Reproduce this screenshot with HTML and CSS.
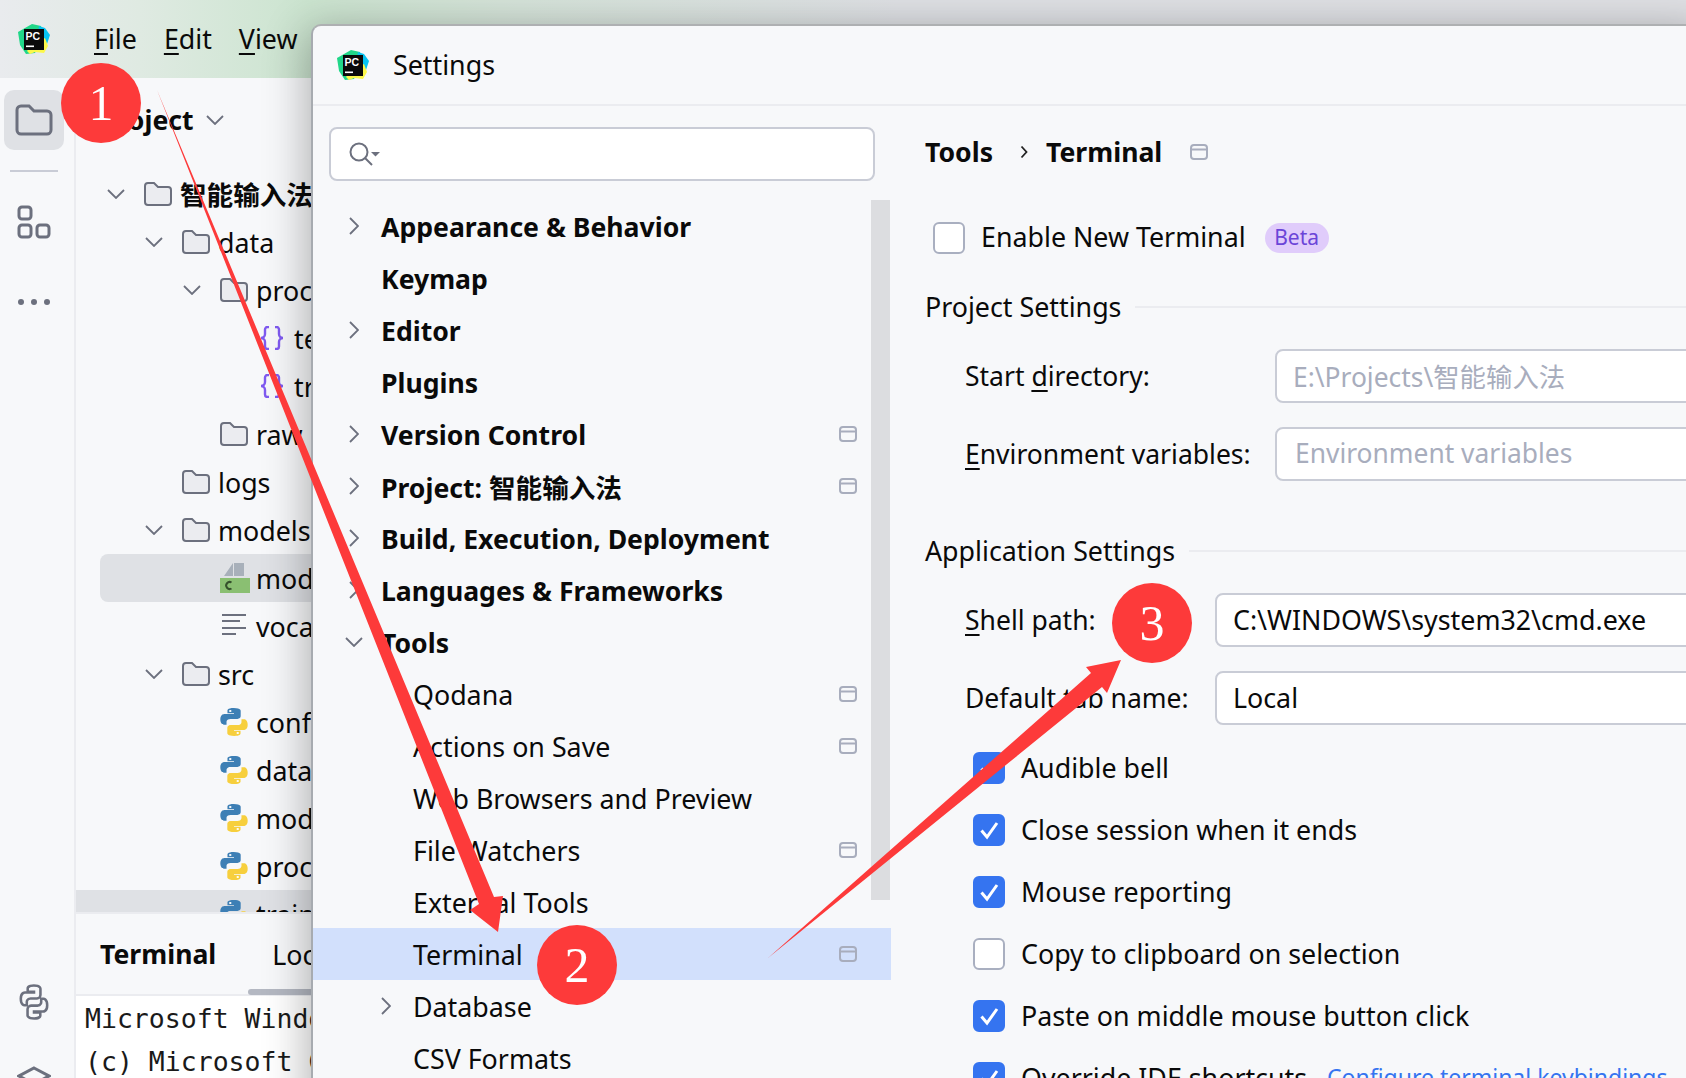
FILE: index.html
```html
<!DOCTYPE html>
<html lang="zh">
<head>
<meta charset="utf-8">
<title>Settings</title>
<link rel="stylesheet" href="styles.css">
</head>
<body>
<svg class="sprite" xmlns="http://www.w3.org/2000/svg">
  <symbol id="folder" viewBox="0 0 28 24"><path d="M1 4a3 3 0 0 1 3-3h6l4 4h10a3 3 0 0 1 3 3v12a3 3 0 0 1-3 3H4a3 3 0 0 1-3-3z" fill="#ebecf0" stroke="#6c707e" stroke-width="2"/></symbol>
  <symbol id="folder-plain" viewBox="0 0 38 32"><path d="M2 6a4 4 0 0 1 4-4h8l5 5h13a4 4 0 0 1 4 4v15a4 4 0 0 1-4 4H6a4 4 0 0 1-4-4z" fill="none" stroke="#6c707e" stroke-width="3"/></symbol>
  <symbol id="chev-down" viewBox="0 0 18 10"><path d="M1 1l8 8 8-8" fill="none" stroke="#6c707e" stroke-width="1.8"/></symbol>
  <symbol id="chev-right" viewBox="0 0 10 18"><path d="M1 1l8 8-8 8" fill="none" stroke="#6c707e" stroke-width="1.8"/></symbol>
  <symbol id="scope" viewBox="0 0 18 16"><rect x="1" y="1" width="16" height="14" rx="3" fill="none" stroke="#a8adbd" stroke-width="2"/><path d="M1 5.5h16" stroke="#a8adbd" stroke-width="2"/></symbol>
  <symbol id="check" viewBox="0 0 32 32"><path d="M8.5 16.5l5.5 6.5 10-14" fill="none" stroke="#fff" stroke-width="3"/></symbol>
  <symbol id="py" viewBox="3 1 18 22" preserveAspectRatio="none">
    <path fill="#3d7fb5" d="M11.9 1C7.5 1 7.8 3 7.8 3v2.1h4.2v.6H6.1S3.2 5.4 3.2 9.9s2.5 4.3 2.5 4.3h1.5v-2.1s-.1-2.5 2.5-2.5h4.2s2.4 0 2.4-2.3V3.4S16.7 1 11.9 1z"/>
    <circle cx="9.6" cy="3.3" r=".8" fill="#fff"/>
    <path fill="#f7cf3d" transform="rotate(180 12 12)" d="M11.9 1C7.5 1 7.8 3 7.8 3v2.1h4.2v.6H6.1S3.2 5.4 3.2 9.9s2.5 4.3 2.5 4.3h1.5v-2.1s-.1-2.5 2.5-2.5h4.2s2.4 0 2.4-2.3V3.4S16.7 1 11.9 1z"/>
    <circle cx="14.4" cy="20.7" r=".8" fill="#fff"/>
  </symbol>
  <symbol id="json" viewBox="0 0 24 24"><path d="M9 1H7.500A2.500 2.500 0 0 0 5 3.500V8a4 4 0 0 1-4 4 4 4 0 0 1 4 4v4.500A2.500 2.500 0 0 0 7.500 23H9M15 1h1.500A2.500 2.500 0 0 1 19 3.500V8a4 4 0 0 0 4 4 4 4 0 0 0-4 4v4.500a2.500 2.500 0 0 1-2.500 2.500H15" fill="none" stroke="#7f5af0" stroke-width="2.400"/></symbol>
  <symbol id="pc" viewBox="0 0 32 32">
    <path fill="#21d789" d="M0 9l14-8 9 2 2 10-8 17-9 1-6-9z"/>
    <path fill="#07c3f2" d="M21 3l6 2 5 7-3 9-10-6z"/>
    <path fill="#fcf84a" d="M9 28l5-6 13-7 3 8-4 7-9-1-5 2z"/>
    <rect x="6" y="6" width="20" height="21" fill="#0a0a0a"/>
    <rect x="8" y="22.500" width="8" height="1.600" fill="#fff"/>
    <text x="7.500" y="17" class="pc-text">PC</text>
  </symbol>
</svg>

<div class="ide">
  <header class="titlebar">
    <svg class="logo"><use href="#pc"/></svg>
    <nav class="menu">
      <span><u>F</u>ile</span>
      <span><u>E</u>dit</span>
      <span><u>V</u>iew</span>
    </nav>
  </header>
  <div class="workspace">
    <aside class="stripe">
      <div class="stripe-active"><svg class="stripe-folder"><use href="#folder-plain"/></svg></div>
      <div class="stripe-sep"></div>
      <svg class="stripe-icon" viewBox="0 0 34 34"><g fill="none" stroke="#6c707e" stroke-width="3"><rect x="2" y="2" width="12" height="12" rx="3"/><rect x="2" y="20" width="12" height="12" rx="3"/><rect x="20" y="20" width="12" height="12" rx="3"/></g></svg>
      <div class="stripe-dots"><i></i><i></i><i></i></div>
      <div class="stripe-spacer"></div>
      <svg class="stripe-py" viewBox="0 0 24 24"><g fill="none" stroke="#6c707e" stroke-width="1.700"><path d="M11.900 1C7.500 1 7.800 3 7.800 3v2.100h4.200v.6H6.100S3.200 5.400 3.200 9.900s2.500 4.300 2.500 4.300h1.500v-2.100s-.1-2.500 2.500-2.500h4.200s2.400 0 2.400-2.300V3.400S16.700 1 11.900 1z"/><path transform="rotate(180 12 12)" d="M11.900 1C7.500 1 7.800 3 7.800 3v2.100h4.200v.6H6.100S3.200 5.400 3.200 9.900s2.500 4.300 2.500 4.300h1.500v-2.100s-.1-2.500 2.500-2.500h4.200s2.400 0 2.400-2.300V3.400S16.700 1 11.900 1z"/></g></svg>
      <svg class="stripe-layers" viewBox="0 0 34 20"><path d="M17 2L32 10 17 18 2 10z" fill="none" stroke="#6c707e" stroke-width="3"/></svg>
    </aside>
    <section class="panel">
      <div class="panel-top">
        <div class="panel-head"><strong class="panel-title">Project</strong><svg class="chev-d head-chev"><use href="#chev-down"/></svg></div>
        <div class="row l0"><svg class="chev-d"><use href="#chev-down"/></svg><svg class="ico-folder"><use href="#folder"/></svg><strong class="cjk">智能输入法</strong></div>
        <div class="row l1"><svg class="chev-d"><use href="#chev-down"/></svg><svg class="ico-folder"><use href="#folder"/></svg><span>data</span></div>
        <div class="row l2"><svg class="chev-d"><use href="#chev-down"/></svg><svg class="ico-folder"><use href="#folder"/></svg><span>processed</span></div>
        <div class="row l3"><svg class="ico-json"><use href="#json"/></svg><span>test.json</span></div>
        <div class="row l3"><svg class="ico-json"><use href="#json"/></svg><span>train.json</span></div>
        <div class="row l2 leaf"><svg class="ico-folder"><use href="#folder"/></svg><span>raw</span></div>
        <div class="row l1 leaf"><svg class="ico-folder"><use href="#folder"/></svg><span>logs</span></div>
        <div class="row l1"><svg class="chev-d"><use href="#chev-down"/></svg><svg class="ico-folder"><use href="#folder"/></svg><span>models</span></div>
        <div class="row l2 leaf sel"><svg class="ico-file" viewBox="0 0 30 30"><path d="M4 13L13 0v13zM14 0h10v13H14z" fill="#a8b0ba"/><rect y="15" width="30" height="15" fill="#8abf72"/><path d="M11.500 19.500a3.500 3.500 0 1 0 0 6" fill="none" stroke="#35502c" stroke-width="2"/></svg><span>model.pt</span></div>
        <div class="row l2 leaf"><svg class="ico-file" viewBox="0 0 30 30"><path d="M2 4h24M2 10h18M2 17h24M2 23h14" stroke="#6c707e" stroke-width="2"/></svg><span>vocab.txt</span></div>
        <div class="row l1"><svg class="chev-d"><use href="#chev-down"/></svg><svg class="ico-folder"><use href="#folder"/></svg><span>src</span></div>
        <div class="row l2 leaf"><svg class="ico-py"><use href="#py"/></svg><span>config.py</span></div>
        <div class="row l2 leaf"><svg class="ico-py"><use href="#py"/></svg><span>dataset.py</span></div>
        <div class="row l2 leaf"><svg class="ico-py"><use href="#py"/></svg><span>model.py</span></div>
        <div class="row l2 leaf"><svg class="ico-py"><use href="#py"/></svg><span>process.py</span></div>
        <div class="row l2 leaf band"><svg class="ico-py"><use href="#py"/></svg><span>train.py</span></div>
      </div>
      <div class="term-panel">
        <div class="term-tabs"><strong class="term-tab-a">Terminal</strong><span class="term-tab-b">Local</span><div class="term-thumb"></div></div>
        <pre class="term-out">Microsoft Windows [版本 10.0]
(c) Microsoft Corporation</pre>
      </div>
    </section>
  </div>
</div>

<div class="dialog">
  <div class="dlg-title"><svg class="logo"><use href="#pc"/></svg><span class="dlg-name">Settings</span></div>
  <div class="dlg-body">
    <div class="nav">
      <div class="search"><svg class="search-ico" viewBox="0 0 32 28"><circle cx="11" cy="11" r="8.500" fill="none" stroke="#6c707e" stroke-width="2"/><path d="M17 17l7 7" stroke="#6c707e" stroke-width="2"/><path d="M23 11h9l-4.500 4.500z" fill="#6c707e"/></svg></div>
      <div class="nav-list">
        <div class="nav-row top"><svg class="chev-r"><use href="#chev-right"/></svg><span>Appearance &amp; Behavior</span></div>
        <div class="nav-row top"><span>Keymap</span></div>
        <div class="nav-row top"><svg class="chev-r"><use href="#chev-right"/></svg><span>Editor</span></div>
        <div class="nav-row top"><span>Plugins</span></div>
        <div class="nav-row top"><svg class="chev-r"><use href="#chev-right"/></svg><span>Version Control</span><svg class="scope"><use href="#scope"/></svg></div>
        <div class="nav-row top"><svg class="chev-r"><use href="#chev-right"/></svg><span>Project: 智能输入法</span><svg class="scope"><use href="#scope"/></svg></div>
        <div class="nav-row top"><svg class="chev-r"><use href="#chev-right"/></svg><span>Build, Execution, Deployment</span></div>
        <div class="nav-row top"><svg class="chev-r"><use href="#chev-right"/></svg><span>Languages &amp; Frameworks</span></div>
        <div class="nav-row top"><svg class="chev-dn"><use href="#chev-down"/></svg><span>Tools</span></div>
        <div class="nav-row sub"><span>Qodana</span><svg class="scope"><use href="#scope"/></svg></div>
        <div class="nav-row sub"><span>Actions on Save</span><svg class="scope"><use href="#scope"/></svg></div>
        <div class="nav-row sub"><span>Web Browsers and Preview</span></div>
        <div class="nav-row sub"><span>File Watchers</span><svg class="scope"><use href="#scope"/></svg></div>
        <div class="nav-row sub"><span>External Tools</span></div>
        <div class="nav-row sub current"><span>Terminal</span><svg class="scope"><use href="#scope"/></svg></div>
        <div class="nav-row sub parent"><svg class="chev-r"><use href="#chev-right"/></svg><span>Database</span></div>
        <div class="nav-row sub"><span>CSV Formats</span></div>
      </div>
      <div class="nav-thumb"></div>
    </div>
    <main class="content">
      <div class="crumbs"><strong>Tools</strong><svg class="crumb-sep" viewBox="0 0 8 14"><path d="M1.500 1.500l5 5.500-5 5.500" fill="none" stroke="#222" stroke-width="1.800"/></svg><strong>Terminal</strong><svg class="scope crumb-scope"><use href="#scope"/></svg></div>
      <div class="check-line enable"><span class="box"></span><span class="check-label">Enable New Terminal</span><span class="beta">Beta</span></div>
      <div class="group-title g1"><span>Project Settings</span><i></i></div>
      <div class="form form-a">
        <label>Start <u>d</u>irectory:</label><div class="input ph ph-a">E:\Projects\智能输入法</div>
        <label><u>E</u>nvironment variables:</label><div class="input ph ph-b">Environment variables</div>
      </div>
      <div class="group-title g2"><span>Application Settings</span><i></i></div>
      <div class="form form-b">
        <label><u>S</u>hell path:</label><div class="input">C:\WINDOWS\system32\cmd.exe</div>
        <label>Default tab name:</label><div class="input">Local</div>
      </div>
      <div class="checks">
        <div class="check-line"><span class="box on"><svg class="tick"><use href="#check"/></svg></span><span class="check-label">Audible bell</span></div>
        <div class="check-line"><span class="box on"><svg class="tick"><use href="#check"/></svg></span><span class="check-label">Close session when it ends</span></div>
        <div class="check-line"><span class="box on"><svg class="tick"><use href="#check"/></svg></span><span class="check-label">Mouse reporting</span></div>
        <div class="check-line"><span class="box"></span><span class="check-label">Copy to clipboard on selection</span></div>
        <div class="check-line"><span class="box on"><svg class="tick"><use href="#check"/></svg></span><span class="check-label">Paste on middle mouse button click</span></div>
        <div class="check-line"><span class="box on"><svg class="tick"><use href="#check"/></svg></span><span class="check-label">Override IDE shortcuts</span><span class="link">Configure terminal keybindings</span></div>
      </div>
    </main>
  </div>
</div>

<svg class="arrows" viewBox="0 0 1686 1078" xmlns="http://www.w3.org/2000/svg">
  <polygon fill="#fd3a3a" points="157,90 494,897 503,896 498,932 470,910 479,904"/>
  <polygon fill="#fd3a3a" points="768,958 1091,673 1086,667 1121,660 1107,693 1102,687"/>
</svg>
<div class="badge b1">1</div>
<div class="badge b2">2</div>
<div class="badge b3">3</div>
</body>
</html>
```
FILE: styles.css
```css
* { box-sizing: border-box; }
html, body { margin: 0; padding: 0; width: 1686px; height: 1078px; overflow: hidden; }
body {
  position: relative;
  background: #f7f8fa;
  color: #0a0a0a;
  font-family: "Noto Sans", "Noto Sans CJK SC", sans-serif;
  font-size: 26.800px;
}
strong { font-size: 26.600px; font-weight: 700; }
.sprite { display: none; }
.pc-text { font: 700 10.500px "Liberation Sans", sans-serif; fill: #fff; }
u { text-underline-offset: 4px; text-decoration-thickness: 2px; }

.ide { display: flex; flex-direction: column; height: 1078px; }
.titlebar {
  height: 78px;
  display: flex;
  align-items: center;
  padding-left: 18px;
  background: linear-gradient(90deg, #e9ebee 0, #dfeae2 140px, #cbe4cf 310px, #d6e4da 520px, #dfe1e5 900px, #e0e1e5 1686px);
}
.logo { width: 32px; height: 32px; flex: none; }
.menu { display: flex; gap: 27px; margin-left: 44px; margin-bottom: 2px; }
.workspace { flex: 1; display: flex; min-height: 0; }

.stripe {
  width: 76px;
  flex: none;
  display: flex;
  flex-direction: column;
  align-items: center;
  background: #f7f8fa;
  border-right: 2px solid #ebecf0;
  padding: 12px 6px 0 0;
}
.stripe-active { width: 60px; height: 60px; border-radius: 10px; background: #dfe1e5; display: flex; align-items: center; justify-content: center; flex: none; }
.stripe-folder { width: 38px; height: 32px; }
.stripe-sep { width: 48px; height: 2px; background: #c9ccd6; margin-top: 20px; }
.stripe-icon { width: 34px; height: 34px; margin-top: 33px; }
.stripe-dots { display: flex; gap: 7px; margin-top: 60px; }
.stripe-dots i { width: 6px; height: 6px; border-radius: 50%; background: #6c707e; }
.stripe-spacer { flex: 1; }
.stripe-py { width: 36px; height: 36px; margin-bottom: 46px; }
.stripe-layers { width: 34px; height: 20px; margin-bottom: -8px; }

.panel { flex: 1; display: flex; flex-direction: column; min-width: 0; }
.panel-top { height: 834px; overflow: hidden; }
.panel-head { height: 92px; display: flex; align-items: center; padding-left: 24px; padding-bottom: 8px; }
.head-chev { margin-left: 12px; }
.row { height: 48px; display: flex; align-items: center; white-space: nowrap; overflow: hidden; }
.l0 { padding-left: 31px; }
.l1 { padding-left: 69px; }
.l2 { padding-left: 107px; }
.l3 { padding-left: 184px; }
.l2.leaf { padding-left: 144px; }
.l1.leaf { padding-left: 106px; }
.sel { margin-left: 24px; padding-left: 120px !important; background: #dfe1e5; border-radius: 8px 0 0 8px; }
.band { background: #dfe1e5; }
.chev-d { width: 18px; height: 10px; flex: none; margin-right: 19px; }
.head-chev { margin-right: 0; }
.cjk { margin-bottom: 2px; }
.ico-folder { width: 28px; height: 24px; flex: none; margin-right: 8px; }
.ico-json { width: 24px; height: 24px; flex: none; margin-right: 10px; }
.ico-file { width: 30px; height: 30px; flex: none; margin-right: 6px; }
.ico-py { width: 28px; height: 28px; flex: none; margin-right: 8px; }

.term-panel { flex: 1; display: flex; flex-direction: column; border-top: 2px solid #ebecf0; min-height: 0; }
.term-tabs { position: relative; height: 82px; display: flex; align-items: center; padding-left: 24px; border-bottom: 2px solid #ebecf0; flex: none; }
.term-tab-b { margin-left: 56px; }
.term-thumb { position: absolute; left: 172px; bottom: -1px; width: 200px; height: 6px; border-radius: 3px; background: #b4b8c2; }
.term-out {
  flex: 1;
  margin: 0;
  background: #fff;
  padding: 1px 0 0 9px;
  font: 26.500px/43px "DejaVu Sans Mono", "Noto Sans CJK SC", monospace;
  white-space: pre;
  overflow: hidden;
  color: #1a1a1a;
}

.dialog {
  position: absolute;
  left: 311px;
  top: 24px;
  width: 1400px;
  height: 1100px;
  background: #f7f8fa;
  border-left: 2px solid #a7abb0;
  border-top: 2px solid #aeb0b2;
  border-radius: 10px 0 0 0;
  box-shadow: -4px 6px 44px rgba(0, 0, 0, .3);
}
.dlg-title { height: 80px; display: flex; align-items: center; padding-left: 24px; gap: 24px; border-bottom: 2px solid #ebecf0; }
.dlg-name { margin-bottom: 2px; }
.dlg-body { display: flex; }
.nav { position: relative; width: 578px; flex: none; }
.search { margin: 21px 0 0 16px; width: 546px; height: 54px; background: #fff; border: 2px solid #c9ccd6; border-radius: 8px; display: flex; align-items: center; padding-left: 17px; }
.search-ico { width: 32px; height: 28px; margin-top: 2px; }
.nav-list { margin-top: 19px; }
.nav-row { height: 52px; display: flex; align-items: center; position: relative; white-space: nowrap; }
.top { padding-left: 68px; font-weight: 700; font-size: 26.600px; }
.sub { padding-left: 100px; }
.nav-row span { margin-top: 1px; }
.current { background: #d2e0fc; }
.chev-r { position: absolute; left: 36px; top: 17px; width: 10px; height: 18px; }
.chev-dn { position: absolute; left: 32px; top: 21px; width: 18px; height: 10px; }
.parent .chev-r { left: 68px; }
.scope { position: absolute; left: 526px; top: 18px; width: 18px; height: 16px; }
.crumb-scope { position: static; margin-left: 28px; }
.nav-thumb { position: absolute; left: 558px; top: 94px; width: 19px; height: 700px; background: #dcdde0; }

.content { flex: 1; padding: 20px 0 0 34px; min-width: 0; }
.crumbs { height: 54px; padding-bottom: 2px; display: flex; align-items: center; }
.crumb-sep { width: 8px; height: 14px; margin: 0 18px 0 27px; }
.check-line { height: 32px; display: flex; align-items: center; white-space: nowrap; }
.check-line .check-label { margin-bottom: 2px; }
.enable { margin: 42px 0 0 8px; }
.enable .check-label { margin-bottom: 3px; }
.box { width: 32px; height: 32px; flex: none; border-radius: 6px; border: 2px solid #a9afc0; background: #fff; }
.box.on { background: #3574f0; border-color: #3574f0; position: relative; }
.tick { position: absolute; left: -2px; top: -2px; width: 32px; height: 32px; }
.check-label { margin-left: 16px; }
.beta { margin-left: 19px; height: 30px; width: 64px; padding-bottom: 2px; border-radius: 15px; background: #e0ccfb; color: #6b45d8; font-size: 21px; display: flex; align-items: center; justify-content: center; }
.group-title { height: 36px; display: flex; align-items: center; gap: 14px; white-space: nowrap; }
.group-title span { margin-bottom: 2px; }
.group-title i { flex: 1; height: 2px; background: #ebecf0; }
.g1 { margin-top: 35px; }
.g2 { margin-top: 52px; }
.form { display: grid; row-gap: 24px; align-items: center; padding-left: 40px; margin-top: 24px; white-space: nowrap; font-size: 26.500px; }
.form-a { grid-template-columns: 310px 1fr; }
.form-b { grid-template-columns: 250px 1fr; }
.input { height: 54px; background: #fff; border: 2px solid #c9ccd6; border-radius: 8px; display: flex; align-items: center; padding-left: 16px; padding-bottom: 2px; font-size: 26.800px; }
.ph { color: #a8adbd; font-size: 26.400px; }
.ph-b { padding-left: 18px; }
.checks { margin: 27px 0 0 48px; display: flex; flex-direction: column; gap: 30px; }
.link { margin-left: 20px; color: #3574f0; font-size: 23px; margin-bottom: 2px; }

.arrows { position: absolute; left: 0; top: 0; width: 1686px; height: 1078px; pointer-events: none; }
.badge {
  position: absolute;
  width: 80px;
  height: 80px;
  border-radius: 50%;
  background: #fd3a3a;
  color: #fff;
  font: 50px/80px "Liberation Serif", serif;
  text-align: center;
}
.b1 { left: 61px; top: 63px; }
.b2 { left: 537px; top: 925px; }
.b3 { left: 1112px; top: 583px; }
```
